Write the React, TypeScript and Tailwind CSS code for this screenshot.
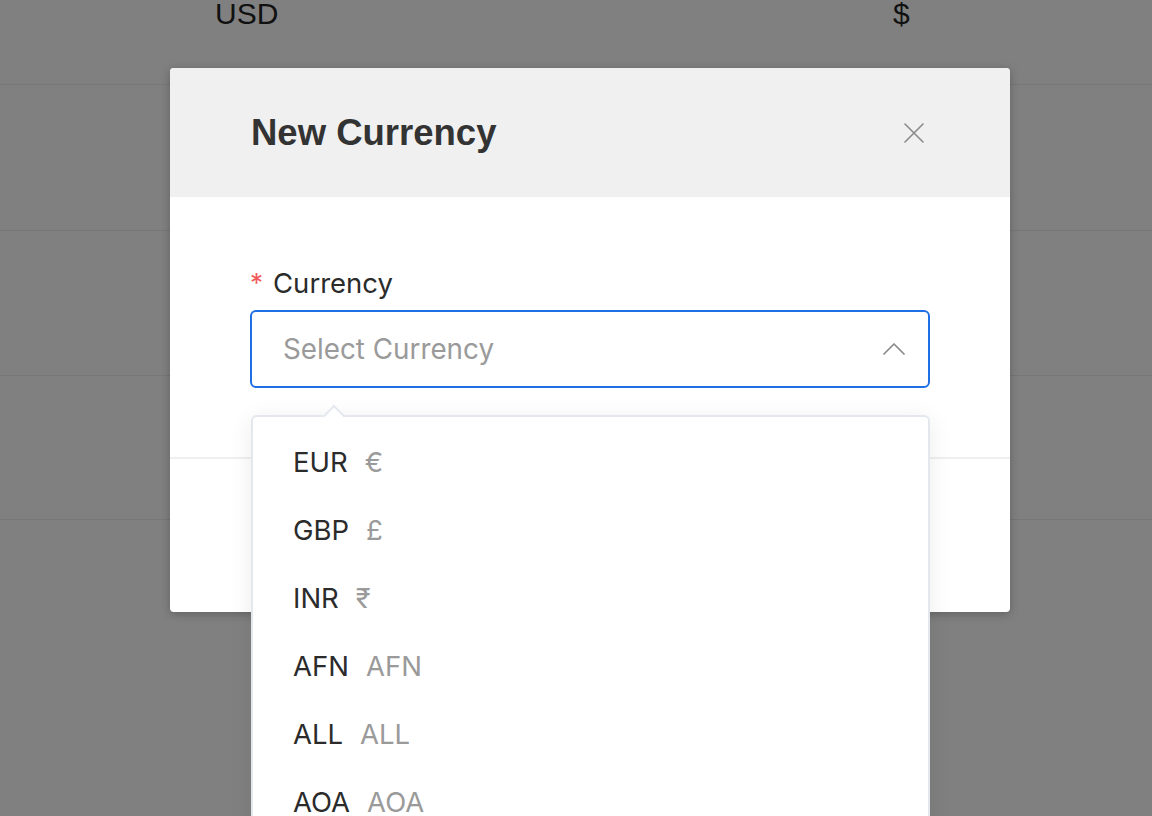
import React from 'react';

const currencies = [
  { code: 'EUR', symbol: '€' },
  { code: 'GBP', symbol: '£' },
  { code: 'INR', symbol: '₹' },
  { code: 'AFN', symbol: 'AFN' },
  { code: 'ALL', symbol: 'ALL' },
  { code: 'AOA', symbol: 'AOA' },
  { code: 'AMD', symbol: 'AMD' },
];

function BackgroundTable() {
  return (
    <div className="flex flex-col -mt-[58px]">
      <div className="h-[143px] border-b border-[#777777] flex items-center text-[30px] text-[#111] font-['Liberation_Sans',Arial,sans-serif]">
        <span className="ml-[215px] w-[678px]">USD</span>
        <span>$</span>
      </div>
      <div className="h-[146px] border-b border-[#777777]" />
      <div className="h-[145px] border-b border-[#777777]" />
      <div className="h-[144px] border-b border-[#777777]" />
    </div>
  );
}

export default function App() {
  return (
    <div className="relative w-[1152px] h-[816px] overflow-hidden bg-[#808080] font-['Inter',sans-serif]">
      <BackgroundTable />

      <div className="absolute left-[170px] top-[68px] w-[840px] h-[544px] bg-white rounded-[4px] shadow-[0_2px_10px_rgba(0,0,0,0.25)] overflow-hidden flex flex-col">
        <div className="h-[129px] bg-[#eff0ef] flex items-center justify-between pl-[81px] pr-[86px]">
          <h2 className="text-[36.5px] font-bold text-[#333] font-['Liberation_Sans',Arial,sans-serif] pt-[2px]">New Currency</h2>
          <svg width="20" height="20" viewBox="0 0 20 20" fill="none" stroke="#8a8a8a" strokeWidth="1.6" strokeLinecap="round">
            <path d="M1 1L19 19M19 1L1 19" />
          </svg>
        </div>

        <div className="px-[80px] pt-[68px] pb-[69px] border-b-2 border-[#eef0f0]">
          <div className="flex items-center gap-[10px] text-[27.5px] text-[#2b2b2b] leading-[36px]">
            <span className="text-[#f05a5a] text-[26px]">*</span>
            <span>Currency</span>
          </div>
          <div className="mt-[9px] h-[78px] border-2 border-[#1f6fe5] rounded-[6px] flex items-center justify-between pl-[31px] pr-[23px]">
            <span className="text-[27.8px] text-[#9a9a9a] pt-[2px]">Select Currency</span>
            <svg width="22" height="14" viewBox="0 0 22 14" fill="none" stroke="#8a8a8a" strokeWidth="1.7" strokeLinecap="round" strokeLinejoin="round">
              <path d="M1 12L11 2L21 12" />
            </svg>
          </div>
        </div>
        <div className="flex-1" />
      </div>

      <div className="absolute left-[251px] top-[415px] w-[679px] h-[420px] bg-white border-2 border-[#e4e8ee] rounded-[6px] shadow-[0_4px_24px_rgba(0,0,0,0.08)]">
        <div className="absolute -top-[9px] left-[73px] w-[16px] h-[16px] bg-white border-l-2 border-t-2 border-[#e4e8ee] rotate-45" />
        <ul className="pt-[12px] relative">
          {currencies.map((c) => (
            <li key={c.code} className="h-[68px] flex items-center pl-[40px] gap-[17px] text-[27.5px]">
              <span className="text-[#2b2b2b]">{c.code}</span>
              <span className="text-[#9a9a9a]">{c.symbol}</span>
            </li>
          ))}
        </ul>
      </div>
    </div>
  );
}
